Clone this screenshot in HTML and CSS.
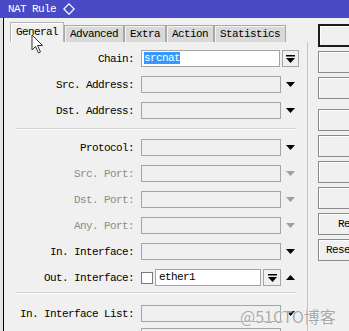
FILE: index.html
```html
<!DOCTYPE html>
<html lang="en">

<head>
    <meta charset="UTF-8">
    <title>NAT Rule</title>
    <link rel="stylesheet" href="styles.css">
</head>

<body>
    <div class="titlebar">
        <span>NAT Rule</span>
        <svg class="diamond" width="12" height="12" viewBox="0 0 12 12"><polygon points="6,0.8 11.2,6 6,11.2 0.8,6" fill="none" stroke="#fff" stroke-width="1.2"/></svg>
    </div>
    <div class="frame">
        <div class="edge"></div>
        <div class="main">
            <div class="tabs">
                <div class="tab active">General</div>
                <div class="tab">Advanced</div>
                <div class="tab">Extra</div>
                <div class="tab">Action</div>
                <div class="tab">Statistics</div>
            </div>
            <div class="form">
                <div class="row">
                    <label>Chain:</label>
                    <div class="field white chain"><span class="selected">srcnat</span></div>
                    <div class="dropbtn"><svg width="9" height="8" viewBox="0 0 9 8"><rect x="0" y="0" width="9" height="1.5"/><polygon points="0,3 9,3 4.5,8"/></svg></div>
                </div>
                <div class="row">
                    <label>Src. Address:</label>
                    <div class="field"></div>
                    <div class="arrow"><svg width="9" height="5" viewBox="0 0 9 5"><polygon points="0,0 9,0 4.5,5"/></svg></div>
                </div>
                <div class="row">
                    <label>Dst. Address:</label>
                    <div class="field"></div>
                    <div class="arrow"><svg width="9" height="5" viewBox="0 0 9 5"><polygon points="0,0 9,0 4.5,5"/></svg></div>
                </div>
                <div class="sep"></div>
                <div class="row">
                    <label>Protocol:</label>
                    <div class="field"></div>
                    <div class="arrow"><svg width="9" height="5" viewBox="0 0 9 5"><polygon points="0,0 9,0 4.5,5"/></svg></div>
                </div>
                <div class="row">
                    <label class="dim">Src. Port:</label>
                    <div class="field"></div>
                    <div class="arrow dim"><svg width="9" height="5" viewBox="0 0 9 5"><polygon points="0,0 9,0 4.5,5"/></svg></div>
                </div>
                <div class="row">
                    <label class="dim">Dst. Port:</label>
                    <div class="field"></div>
                    <div class="arrow dim"><svg width="9" height="5" viewBox="0 0 9 5"><polygon points="0,0 9,0 4.5,5"/></svg></div>
                </div>
                <div class="row">
                    <label class="dim">Any. Port:</label>
                    <div class="field"></div>
                    <div class="arrow dim"><svg width="9" height="5" viewBox="0 0 9 5"><polygon points="0,0 9,0 4.5,5"/></svg></div>
                </div>
                <div class="row">
                    <label>In. Interface:</label>
                    <div class="field"></div>
                    <div class="arrow"><svg width="9" height="5" viewBox="0 0 9 5"><polygon points="0,0 9,0 4.5,5"/></svg></div>
                </div>
                <div class="row">
                    <label>Out. Interface:</label>
                    <div class="check"></div>
                    <div class="field white iface">ether1</div>
                    <div class="dropbtn small"><svg width="9" height="8" viewBox="0 0 9 8"><rect x="0" y="0" width="9" height="1.5"/><polygon points="0,3 9,3 4.5,8"/></svg></div>
                    <div class="arrow"><svg width="9" height="5" viewBox="0 0 9 5"><polygon points="0,5 9,5 4.5,0"/></svg></div>
                </div>
                <div class="sep low"></div>
                <div class="row">
                    <label>In. Interface List:</label>
                    <div class="field"></div>
                    <div class="arrow"><svg width="9" height="5" viewBox="0 0 9 5"><polygon points="0,0 9,0 4.5,5"/></svg></div>
                </div>
                <div class="row last">
                    <label></label>
                    <div class="field"></div>
                </div>
            </div>
        </div>
        <div class="actions">
            <div class="btn default">OK</div>
            <div class="btn">Cancel</div>
            <div class="btn">Apply</div>
            <div class="btn spaced">Disable</div>
            <div class="btn">Comment</div>
            <div class="btn">Copy</div>
            <div class="btn">Remove</div>
            <div class="btn">Reset Counters</div>
            <div class="btn">Reset All Counters</div>
        </div>
    </div>

    <!-- mouse pointer over the General tab -->
    <svg class="cursor" width="13" height="20" viewBox="0 0 13 20"><path d="M1 1 L1 16 L4.5 12.5 L7.5 19 L9.5 18 L6.5 11.5 L11.5 11.5 Z" fill="#fff" stroke="#333" stroke-width="1"/></svg>

    <div class="watermark">@51CTO博客</div>
</body>

</html>
```

FILE: styles.css
```css
body {
    margin: 0;
    padding: 0;
    width: 349px;
    height: 331px;
    overflow: hidden;
    position: relative;
    background-color: #f0f0f0;
    font-family: 'Liberation Mono', monospace;
    font-size: 11px;
    letter-spacing: -0.6px;
    color: #000;
}

.titlebar {
    height: 18px;
    background-color: #4a4ac6;
    color: #fff;
    display: flex;
    align-items: center;
    gap: 7px;
    padding-left: 8px;
}

.frame {
    display: flex;
    height: 313px;
}

.edge {
    width: 3px;
    background-color: #e4e4e4;
    border-right: 1px solid #000;
    flex-shrink: 0;
}

.main {
    width: 304px;
    flex-shrink: 0;
    display: flex;
    flex-direction: column;
}

.tabs {
    display: flex;
    align-items: flex-end;
    height: 20px;
    margin-top: 4px;
    padding-left: 6px;
}

.tab {
    height: 16px;
    line-height: 16px;
    padding: 0 5px;
    background-color: #d9d9d9;
    border: 1px solid #a8a8a8;
    border-bottom: none;
    box-shadow: inset 1px 1px #f4f4f4;
}

.tab.active {
    height: 19px;
    line-height: 19px;
    background-color: #f0f0f0;
    border-color: #b4b4b4;
    box-shadow: inset 1px 1px #fff;
}

.form {
    flex: 1;
    display: flex;
    flex-direction: column;
    gap: 9px;
    padding-top: 8px;
    padding-left: 12px;
    border-right: 1px solid #c4c4c4;
}

.row {
    display: flex;
    align-items: center;
    height: 17px;
    flex-shrink: 0;
}

.row label {
    width: 118px;
    margin-right: 7px;
    text-align: right;
    flex-shrink: 0;
}

.row label.dim {
    color: #8c8c8c;
}

.row.last {
    margin-top: -3px;
}

.field {
    width: 140px;
    height: 17px;
    box-sizing: border-box;
    border: 1px solid #a4a4a4;
    background-color: #f0f0f0;
    line-height: 15px;
    padding-left: 2px;
    flex-shrink: 0;
}

.field.white {
    background-color: #fff;
}

.field.chain {
    width: 139px;
}

.field.iface {
    width: 106px;
    padding-left: 3px;
}

.selected {
    background-color: #3399ff;
    color: #fff;
}

.dropbtn {
    width: 17px;
    height: 17px;
    box-sizing: border-box;
    margin-left: 2px;
    border: 1px solid #a4a4a4;
    background-color: #f0f0f0;
    display: flex;
    justify-content: center;
    align-items: center;
}

.dropbtn.small {
    width: 18px;
}

.arrow {
    width: 19px;
    display: flex;
    justify-content: center;
    align-items: center;
}

.arrow svg,
.dropbtn svg {
    fill: #000;
}

.arrow.dim svg {
    fill: #a0a0a0;
}

.check {
    width: 12px;
    height: 12px;
    box-sizing: border-box;
    border: 1px solid #7a7a7a;
    background-color: #fff;
    margin-right: 2px;
    flex-shrink: 0;
}

.sep {
    width: 281px;
    height: 0;
    border-top: 1px solid #d4d4d4;
    border-bottom: 1px solid #fafafa;
    flex-shrink: 0;
}

.sep.low {
    margin-top: -3px;
    margin-bottom: 2px;
}

.actions {
    display: flex;
    flex-direction: column;
    gap: 4px;
    padding-top: 6px;
    padding-left: 10px;
}

.btn {
    width: 124px;
    height: 22px;
    box-sizing: border-box;
    border: 1px solid #8a8a8a;
    box-shadow: inset 1px 1px #fff;
    background-color: #f0f0f0;
    text-align: center;
    line-height: 20px;
    flex-shrink: 0;
}

.btn.default {
    height: 23px;
    border: 2px solid #1c1c1c;
    line-height: 19px;
}

.btn.spaced {
    margin-top: 6px;
}

.cursor {
    position: absolute;
    left: 31px;
    top: 34px;
}

.watermark {
    position: absolute;
    left: 240px;
    top: 304px;
    font-family: 'Noto Sans CJK SC', sans-serif;
    font-size: 16px;
    letter-spacing: 0;
    color: #a8a8a8;
    text-shadow: 0 0 1px #fff, 0 0 1px #fff;
}
```
